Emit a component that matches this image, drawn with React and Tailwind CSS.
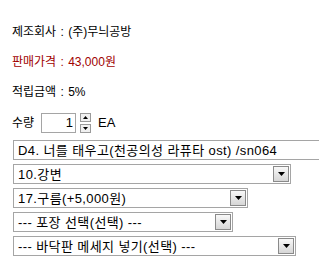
const font = { fontFamily: '"Liberation Sans", "Noto Sans CJK KR", sans-serif' };

function Arrow() {
  return (
    <div className="flex h-[16px] w-[16px] items-center justify-center border border-[#8a8a8a] bg-gradient-to-b from-[#f8f8f8] to-[#d6d6d6]">
      <svg width="7" height="4" viewBox="0 0 7 4">
        <path d="M0 0h7L3.5 4z" fill="#000" />
      </svg>
    </div>
  );
}

function FakeSelect({ label, width, arrow = true }) {
  return (
    <div
      className="flex h-[20px] shrink-0 items-center justify-between border border-[#a5a5a5] bg-white pl-[4px] pr-[1px] text-[13px] leading-none tracking-[0.4px] text-black"
      style={{ width }}
    >
      <span className="whitespace-nowrap">{label}</span>
      {arrow && <Arrow />}
    </div>
  );
}

function Info({ label, value, className = '' }) {
  return (
    <div className={`flex h-[30px] items-center ${className}`}>
      <span>{label}</span>
      <span className="inline-block w-[12px] text-center">:</span>
      <span>{value}</span>
    </div>
  );
}

export default function App() {
  return (
    <div className="h-[263px] w-[319px] overflow-hidden bg-white pl-[12px] pt-[17px] text-[12px] text-black" style={font}>
      <Info label="제조회사" value="(주)무늬공방" />
      <Info label="판매가격" value="43,000원" className="text-[#a00000]" />
      <Info label="적립금액" value="5%" />
      <div className="flex h-[32px] items-center">
        <span>수량</span>
        <div className="ml-[7px] flex h-[20px] w-[35px] items-center justify-end border border-[#a5a5a5] pr-[2px] text-[13px]">1</div>
        <div className="ml-[4px] flex h-[20px] flex-col justify-between">
          <div className="flex h-[9px] w-[11px] items-center justify-center border border-[#9a9a9a] bg-[#f0f0f0]">
            <svg width="5" height="3" viewBox="0 0 5 3"><path d="M2.5 0L5 3H0z" fill="#000" /></svg>
          </div>
          <div className="flex h-[9px] w-[11px] items-center justify-center border border-[#9a9a9a] bg-[#f0f0f0]">
            <svg width="5" height="3" viewBox="0 0 5 3"><path d="M0 0h5L2.5 3z" fill="#000" /></svg>
          </div>
        </div>
        <span className="ml-[7px] text-[13px]">EA</span>
      </div>
      <div className="mt-[1px] flex flex-col gap-[4px] pl-[1px]">
        <FakeSelect label="D4. 너를 태우고(천공의성 라퓨타 ost) /sn064" width={330} arrow={false} />
        <FakeSelect label="10.강변" width={278} />
        <FakeSelect label="17.구름(+5,000원)" width={235} />
        <FakeSelect label="--- 포장 선택(선택) ---" width={220} />
        <FakeSelect label="--- 바닥판 메세지 넣기(선택) ---" width={283} />
      </div>
    </div>
  );
}
